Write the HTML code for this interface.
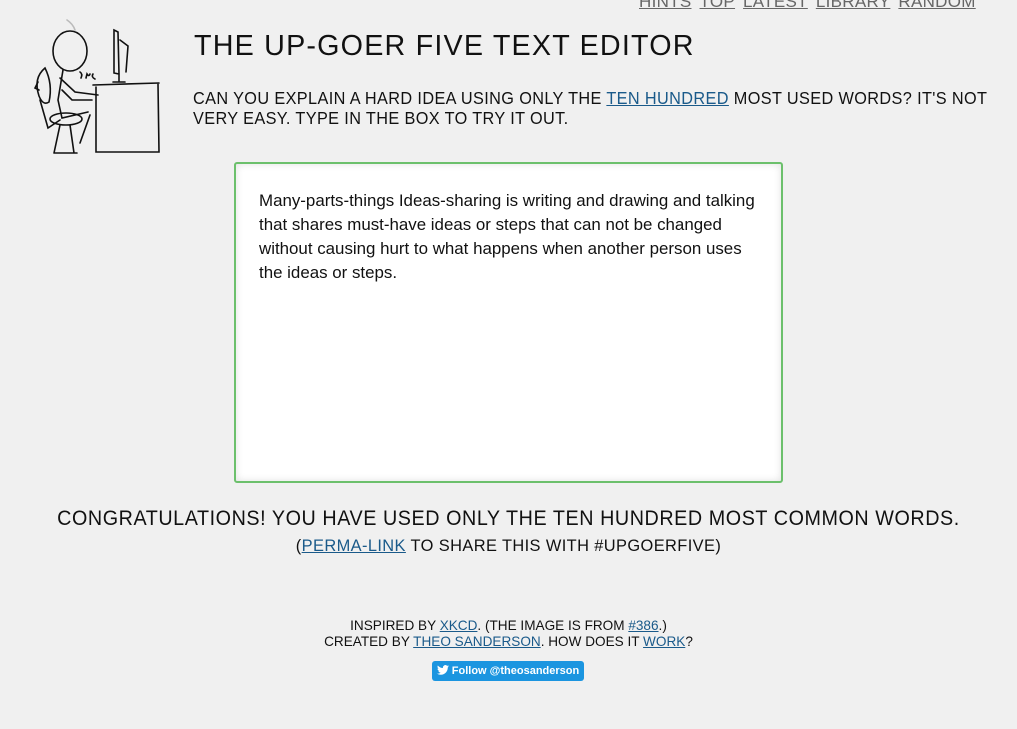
<!DOCTYPE html>
<html><head><meta charset="utf-8"><style>
body{margin:0;width:1017px;height:729px;background:#f0f0f0;font-family:"Liberation Sans",sans-serif;position:relative;overflow:hidden;color:#111}
.a{position:absolute;white-space:nowrap}
a{color:#1a5a8a;text-decoration:underline}
.nav{top:-8px;left:639px;font-size:17px;color:#666;letter-spacing:0.3px}
.nav span{text-decoration:underline;margin-right:8px}
.t{left:194px;top:30px;font-size:29px;letter-spacing:1.2px;transform:scaleX(0.99);transform-origin:left}
.s{left:193px;top:88px;font-size:17.5px;line-height:20px;letter-spacing:0.4px;transform:scaleX(0.93);transform-origin:left}
.box{position:absolute;left:234px;top:162px;width:545px;height:317px;border:2px solid #6cc06c;border-radius:3px;background:#fff;box-shadow:inset 0 0 8px rgba(0,0,0,.12)}
.box div{position:absolute;left:23px;top:25px;font-size:16.9px;line-height:24px;white-space:nowrap}
.c{left:0;width:1017px;text-align:center}
</style></head><body>
<div class="a nav"><span>HINTS</span><span>TOP</span><span>LATEST</span><span>LIBRARY</span><span>RANDOM</span></div>
<svg class="a" style="left:30px;top:15px" width="135" height="145" viewBox="30 15 135 145" fill="none" stroke="#111" stroke-width="1.6" stroke-linecap="round">
<path d="M67 20 q6 4 8 10" stroke="#bbb"/>
<ellipse cx="70" cy="51" rx="17" ry="20"/>
<path d="M63 70 L58 100 L62 118 L88 112"/>
<path d="M60 78 L75 92 L98 95"/>
<path d="M62 90 L72 100 L92 100"/>
<path d="M45 68 q-12 10 -6 28 q4 10 10 6 q4 -18 -4 -34z"/>
<path d="M38 82 l-3 6 l4 2"/>
<path d="M40 100 l8 28 l12 -8"/>
<ellipse cx="66" cy="119" rx="16" ry="6"/>
<path d="M60 125 l-6 28 M70 125 l4 28 M55 153 h22 M90 115 l-10 28"/>
<path d="M81 78 q2 -4 -1 -6 M86 78 l1 -4 q2 3 3 0 M93 74 q-2 3 2 5"/>
<path d="M114 30 l4 2 l1 42 l-5 -1z M120 40 l8 6 l-2 26 M119 73 v8 M113 82 h12"/>
<path d="M93 85 l66 -2 M96 87 v65 l63 0 l-1 -68"/>
</svg>
<div class="a t">THE UP-GOER FIVE TEXT EDITOR</div>
<div class="a s">CAN YOU EXPLAIN A HARD IDEA USING ONLY THE <a>TEN HUNDRED</a> MOST USED WORDS? IT'S NOT<br>VERY EASY. TYPE IN THE BOX TO TRY IT OUT.</div>
<div class="box"><div>Many-parts-things Ideas-sharing is writing and drawing and talking<br>that shares must-have ideas or steps that can not be changed<br>without causing hurt to what happens when another person uses<br>the ideas or steps.</div></div>
<div class="a c" style="top:507px;font-size:21px;letter-spacing:0.6px;transform:scaleX(0.94)">CONGRATULATIONS! YOU HAVE USED ONLY THE TEN HUNDRED MOST COMMON WORDS.</div>
<div class="a c" style="top:536px;font-size:17px;letter-spacing:0.4px;transform:scaleX(0.966)">(<a>PERMA-LINK</a> TO SHARE THIS WITH #UPGOERFIVE)</div>
<div class="a c" style="top:617px;font-size:14px;line-height:16px;transform:scaleX(0.97)">INSPIRED BY <a>XKCD</a>. (THE IMAGE IS FROM <a>#386</a>.)<br>CREATED BY <a>THEO SANDERSON</a>. HOW DOES IT <a>WORK</a>?</div>
<div class="a" style="left:432px;top:661px;width:152px;height:20px;background:#1b95e0;border-radius:3px;color:#fff;font-size:11px;font-weight:bold;line-height:20px;text-align:center"><svg width="12" height="10" viewBox="0 0 24 20" style="vertical-align:-1px;margin-right:3px"><path fill="#fff" d="M24 2.4a10 10 0 0 1-2.8.8 5 5 0 0 0 2.2-2.7 10 10 0 0 1-3.1 1.2A4.9 4.9 0 0 0 11.9 6 14 14 0 0 1 1.7.9a4.9 4.9 0 0 0 1.5 6.6 5 5 0 0 1-2.2-.6 4.9 4.9 0 0 0 3.9 4.8 5 5 0 0 1-2.2.1 4.9 4.9 0 0 0 4.6 3.4A9.9 9.9 0 0 1 0 17.3 14 14 0 0 0 7.5 19.5c9 0 14-7.5 14-14v-.6A10 10 0 0 0 24 2.4z"/></svg>Follow @theosanderson</div>
</body></html>
